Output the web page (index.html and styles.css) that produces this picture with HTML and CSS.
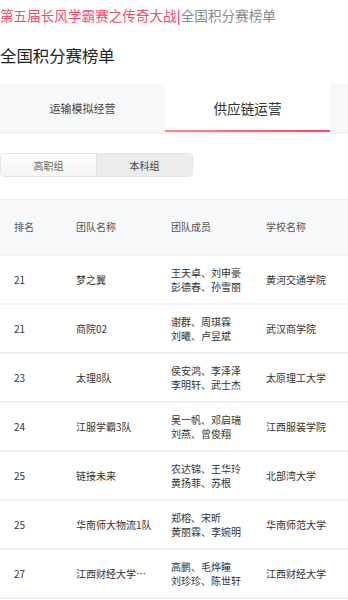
FILE: index.html
```html
<!DOCTYPE html>
<html lang="zh">
<head>
<meta charset="utf-8">
<link rel="stylesheet" href="styles.css">
</head>
<body>
<div class="crumb"><span class="crumb-main">第五届长风学霸赛之传奇大战</span><span class="crumb-sep">|</span><span class="crumb-sub">全国积分赛榜单</span></div>
<h1 class="title">全国积分赛榜单</h1>
<div class="tabs">
  <div class="tab">运输模拟经营</div>
  <div class="tab active">供应链运营</div>
  <div class="tab"></div>
</div>
<div class="seg">
  <div class="seg-item">高职组</div>
  <div class="seg-item on">本科组</div>
</div>
<div class="table">
  <div class="row head">
    <div class="cell">排名</div>
    <div class="cell">团队名称</div>
    <div class="cell">团队成员</div>
    <div class="cell">学校名称</div>
  </div>
  <div class="row">
    <div class="cell">21</div>
    <div class="cell">梦之翼</div>
    <div class="cell">王天卓、刘申豪<br>彭德春、孙雪丽</div>
    <div class="cell">黄河交通学院</div>
  </div>
  <div class="row">
    <div class="cell">21</div>
    <div class="cell">商院02</div>
    <div class="cell">谢群、周琪霖<br>刘曦、卢昱斌</div>
    <div class="cell">武汉商学院</div>
  </div>
  <div class="row">
    <div class="cell">23</div>
    <div class="cell">太理8队</div>
    <div class="cell">侯安鸿、李泽泽<br>李明轩、武士杰</div>
    <div class="cell">太原理工大学</div>
  </div>
  <div class="row">
    <div class="cell">24</div>
    <div class="cell">江服学霸3队</div>
    <div class="cell">吴一帆、邓启瑞<br>刘燕、曾俊翔</div>
    <div class="cell">江西服装学院</div>
  </div>
  <div class="row">
    <div class="cell">25</div>
    <div class="cell">链接未来</div>
    <div class="cell">农达锦、王华玲<br>黄扬菲、苏根</div>
    <div class="cell">北部湾大学</div>
  </div>
  <div class="row">
    <div class="cell">25</div>
    <div class="cell">华南师大物流1队</div>
    <div class="cell">郑榕、宋昕<br>黄丽霖、李婉明</div>
    <div class="cell">华南师范大学</div>
  </div>
  <div class="row">
    <div class="cell">27</div>
    <div class="cell"><span class="ellip">江西财经大学长风队</span></div>
    <div class="cell">高鹏、毛烨瞳<br>刘珍珍、陈世轩</div>
    <div class="cell">江西财经大学</div>
  </div>
</div>
</body>
</html>
```
FILE: styles.css
```css
* { box-sizing: border-box; }
html, body { margin: 0; padding: 0; background: #fff; }
body {
  font-family: "Noto Sans CJK SC", "Noto Sans", sans-serif;
  color: #333;
  overflow: hidden;
  width: 348px;
}
.crumb {
  height: 30px;
  line-height: 30px;
  font-size: 13.6px;
  white-space: nowrap;
}
.crumb-main, .crumb-sep { color: #f05070; }
.crumb-sep { font-weight: bold; }
.crumb-sub { color: #8a8a8a; }
.title {
  margin: 13px 0 17px;
  font-size: 16.4px;
  font-weight: normal;
  line-height: 24px;
  color: #222;
}
.tabs {
  display: flex;
  height: 50px;
  background: #f7f8fa;
  border-bottom: 2px solid #f0f1f3;
  overflow: hidden;
}
.tab {
  flex: 0 0 165px;
  display: flex;
  align-items: center;
  justify-content: center;
  font-size: 11px;
  color: #444;
  padding-bottom: 1px;
}
.tab.active {
  background: #fff;
  font-size: 13.6px;
  color: #333;
  position: relative;
}
.tab.active::after {
  content: "";
  position: absolute;
  left: 0; right: 0; bottom: 0;
  height: 2px;
  background: linear-gradient(90deg, #f98a86, #ef4868);
}
.seg {
  display: flex;
  width: 193px;
  height: 24px;
  margin-top: 19px;
  border: 1px solid #e6e6e6;
  border-radius: 4px;
  overflow: hidden;
}
.seg-item {
  flex: 1;
  display: flex;
  align-items: center;
  justify-content: center;
  font-size: 10px;
  color: #666;
  background: linear-gradient(#fdfdfd, #f4f4f4);
}
.seg-item.on {
  background: #ececec;
  color: #444;
  border-left: 1px solid #e0e0e0;
}
.table { margin-top: 22px; }
.row {
  display: grid;
  grid-template-columns: 62px 95px 95px 1fr;
  height: 49px;
  align-items: center;
  border-bottom: 2px solid #f0f0f0;
  font-size: 10px;
  color: #333;
}
.row.head {
  height: 57px;
  background: #f7f8fa;
  border-top: 1px solid #eeeeee;
  color: #555;
}
.cell {
  padding-left: 14px;
  line-height: 14px;
  white-space: nowrap;
  overflow: hidden;
}
.ellip {
  display: block;
  max-width: 76px;
  overflow: hidden;
  text-overflow: ellipsis;
  white-space: nowrap;
}
```
